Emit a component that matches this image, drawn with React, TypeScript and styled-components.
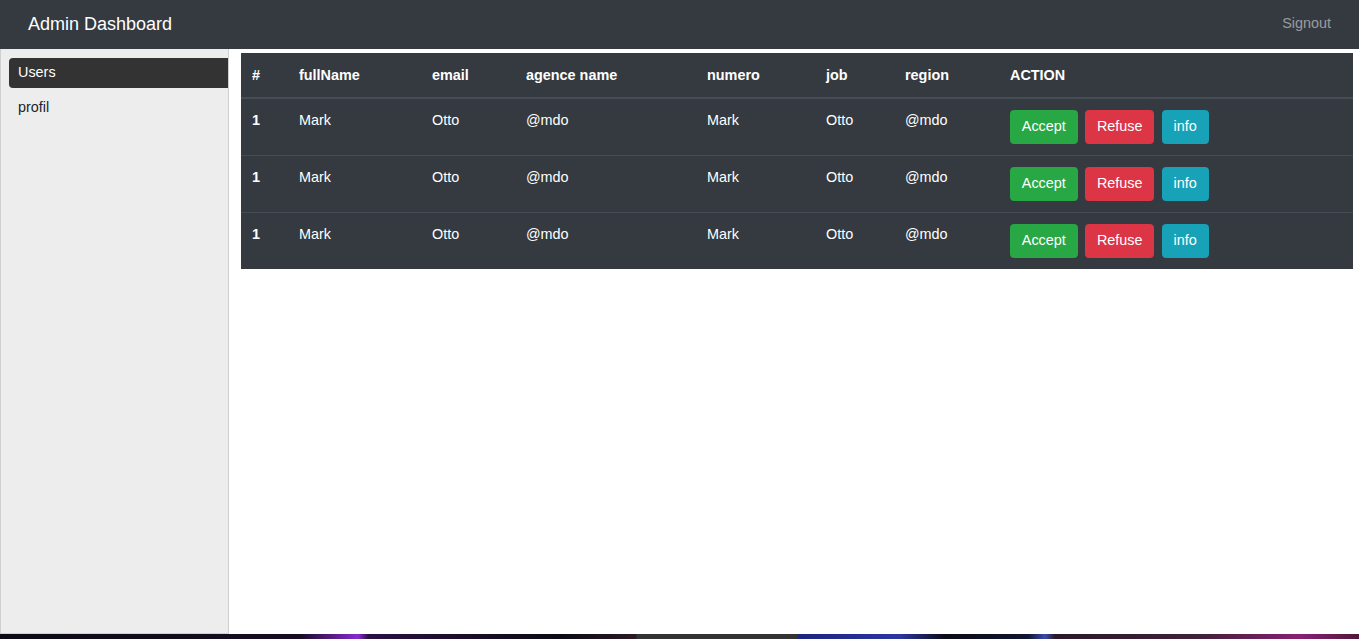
import React, { ReactElement } from 'react';
import styled, { createGlobalStyle } from 'styled-components';

const GlobalStyle = createGlobalStyle`
  html, body {
    margin: 0;
    padding: 0;
  }
  body {
    font-family: 'Liberation Sans', Arial, sans-serif;
    font-size: 14.4px;
    line-height: 1.5;
    color: #212529;
    min-height: 639px;
    background: linear-gradient(
      90deg,
      #0c0a16 0,
      #160c22 300px,
      #8a2ad0 358px,
      #2a1040 368px,
      #0a0a14 560px,
      #2a1a24 636px,
      #333333 637px,
      #333333 797px,
      #1c2480 798px,
      #2b36a0 900px,
      #0a0b18 945px,
      #101530 1028px,
      #3a4ab0 1045px,
      #2a1828 1055px,
      #40203a 1200px,
      #8a2070 1300px,
      #50183a 1359px
    );
  }
`;

const Page = styled.div`
  height: 634px;
  display: flex;
  flex-direction: column;
  background-color: #fff;
`;

const Navbar = styled.nav`
  height: 49px;
  flex-shrink: 0;
  display: flex;
  align-items: center;
  justify-content: space-between;
  padding: 0 28px;
  background-color: #343a40;
`;

const Brand = styled.span`
  font-size: 18px;
  color: #fff;
  margin-top: -1px;
`;

const Signout = styled.a`
  font-size: 14.4px;
  color: rgba(255, 255, 255, 0.5);
  margin-top: -1px;
  cursor: pointer;
`;

const Body = styled.div`
  flex: 1;
  display: flex;
  min-height: 0;
`;

const Sidebar = styled.aside`
  width: 229px;
  box-sizing: border-box;
  flex-shrink: 0;
  display: flex;
  flex-direction: column;
  gap: 5px;
  padding: 9px 0 0 8px;
  background-color: #ededed;
  border: 1px solid #d0d0d0;
  border-top: none;
`;

const NavItem = styled.div<{ $active?: boolean }>`
  height: 30px;
  display: flex;
  align-items: center;
  padding-left: 9px;
  font-size: 14.4px;
  border-radius: 4px 0 0 4px;
  cursor: pointer;
  color: ${({ $active }) => ($active ? '#fff' : '#212529')};
  background-color: ${({ $active }) => ($active ? '#333333' : 'transparent')};
`;

const Main = styled.main`
  flex: 1;
  padding: 4px 6px 0 12px;
`;

const Table = styled.table`
  width: 100%;
  border-collapse: collapse;
  table-layout: fixed;
  color: #fff;
  background-color: #343a40;
`;

const Th = styled.th<{ $width?: number }>`
  box-sizing: border-box;
  width: ${({ $width }) => ($width ? `${$width}px` : 'auto')};
  padding: 12px 11px 10.4px;
  text-align: left;
  font-weight: bold;
  vertical-align: bottom;
  border-bottom: 2px solid #454d55;
`;

const Td = styled.td<{ $bold?: boolean }>`
  padding: 11px;
  vertical-align: top;
  font-weight: ${({ $bold }) => ($bold ? 'bold' : 'normal')};
  border-top: 1px solid #454d55;
`;

const Actions = styled.div`
  display: flex;
  gap: 7.5px;
`;

const toneColor = {
  success: '#28a745',
  danger: '#dc3545',
  info: '#17a2b8',
};

const Button = styled.button<{ $tone: keyof typeof toneColor }>`
  font-family: 'Liberation Sans', Arial, sans-serif;
  font-size: 14.4px;
  line-height: 1.5;
  padding: 5.2px 10.8px;
  color: #fff;
  border-radius: 3.6px;
  cursor: pointer;
  background-color: ${({ $tone }) => toneColor[$tone]};
  border: 1px solid ${({ $tone }) => toneColor[$tone]};
`;

const columns = [
  { label: '#', width: 47 },
  { label: 'fullName', width: 133 },
  { label: 'email', width: 94 },
  { label: 'agence name', width: 181 },
  { label: 'numero', width: 119 },
  { label: 'job', width: 79 },
  { label: 'region', width: 105 },
  { label: 'ACTION' },
];

const users = [
  { id: 1, fullName: 'Mark', email: 'Otto', agence: '@mdo', numero: 'Mark', job: 'Otto', region: '@mdo' },
  { id: 1, fullName: 'Mark', email: 'Otto', agence: '@mdo', numero: 'Mark', job: 'Otto', region: '@mdo' },
  { id: 1, fullName: 'Mark', email: 'Otto', agence: '@mdo', numero: 'Mark', job: 'Otto', region: '@mdo' },
];

export default function App(): ReactElement {
  return (
    <>
      <GlobalStyle />
      <Page>
        <Navbar>
          <Brand>Admin Dashboard</Brand>
          <Signout>Signout</Signout>
        </Navbar>
        <Body>
          <Sidebar>
            <NavItem $active>Users</NavItem>
            <NavItem>profil</NavItem>
          </Sidebar>
          <Main>
            <Table>
              <thead>
                <tr>
                  {columns.map(col => (
                    <Th key={col.label} $width={col.width}>
                      {col.label}
                    </Th>
                  ))}
                </tr>
              </thead>
              <tbody>
                {users.map((u, i) => (
                  <tr key={i}>
                    <Td $bold>{u.id}</Td>
                    <Td>{u.fullName}</Td>
                    <Td>{u.email}</Td>
                    <Td>{u.agence}</Td>
                    <Td>{u.numero}</Td>
                    <Td>{u.job}</Td>
                    <Td>{u.region}</Td>
                    <Td>
                      <Actions>
                        <Button $tone="success">Accept</Button>
                        <Button $tone="danger">Refuse</Button>
                        <Button $tone="info">info</Button>
                      </Actions>
                    </Td>
                  </tr>
                ))}
              </tbody>
            </Table>
          </Main>
        </Body>
      </Page>
    </>
  );
}
